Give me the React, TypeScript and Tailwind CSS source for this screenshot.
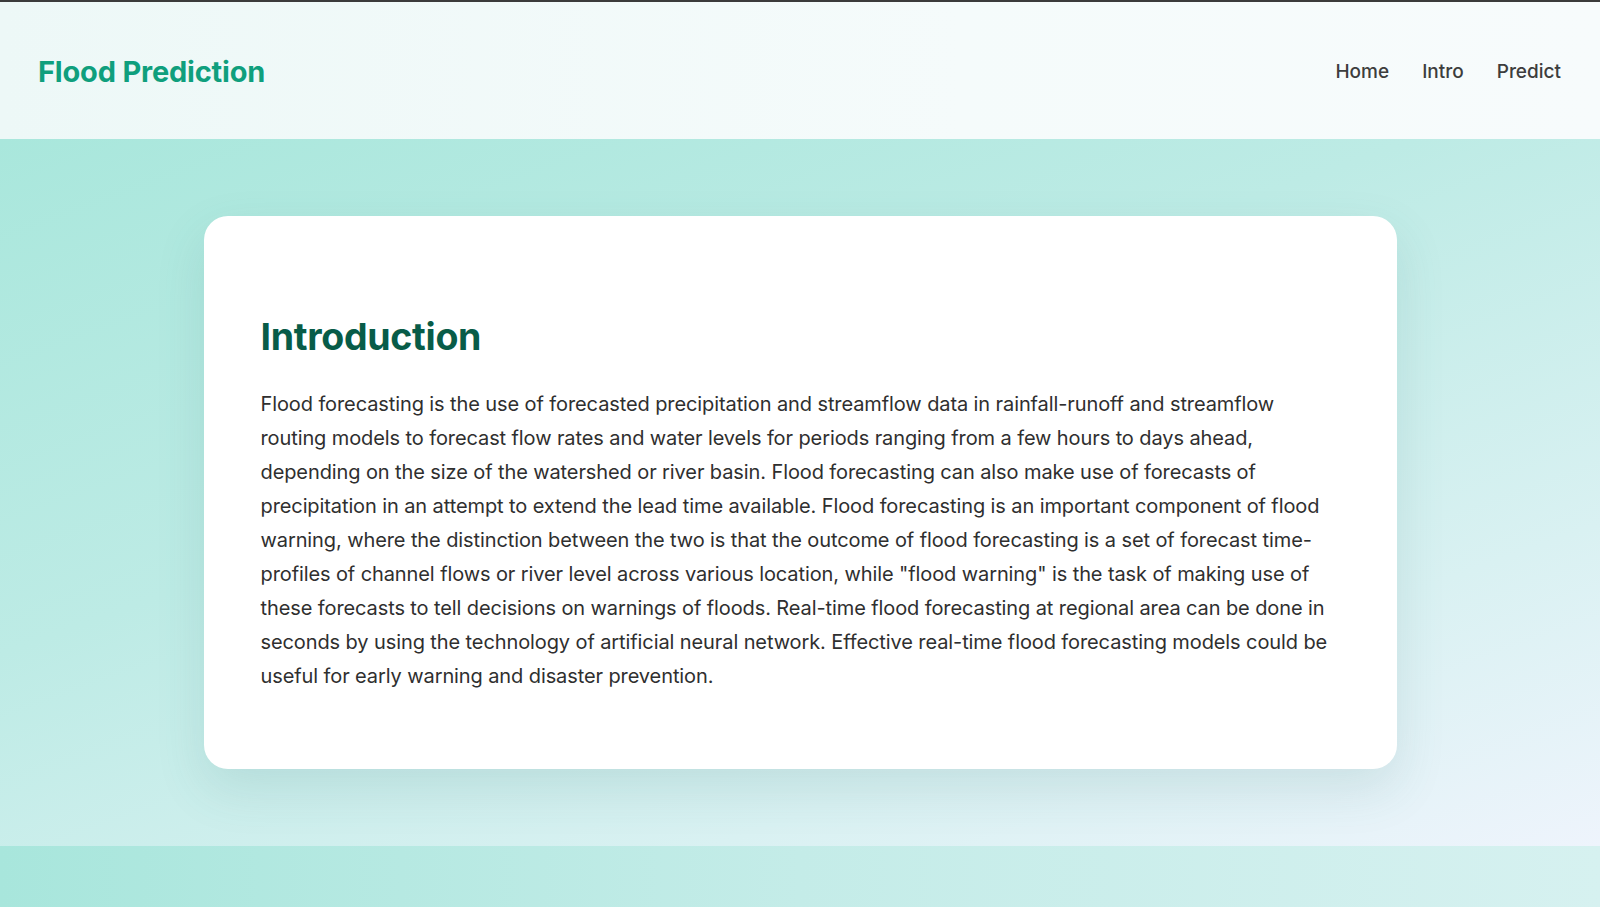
import React from 'react';

const introText =
  'Flood forecasting is the use of forecasted precipitation and streamflow data in rainfall-runoff and streamflow routing models to forecast flow rates and water levels for periods ranging from a few hours to days ahead, depending on the size of the watershed or river basin. Flood forecasting can also make use of forecasts of precipitation in an attempt to extend the lead time available. Flood forecasting is an important component of flood warning, where the distinction between the two is that the outcome of flood forecasting is a set of forecast time-profiles of channel flows or river level across various location, while "flood warning" is the task of making use of these forecasts to tell decisions on warnings of floods. Real-time flood forecasting at regional area can be done in seconds by using the technology of artificial neural network. Effective real-time flood forecasting models could be useful for early warning and disaster prevention.';

export default function App() {
  return (
    <div className="min-h-screen flex flex-col font-['Inter','Noto_Sans',sans-serif]">
      <div className="h-[2px] bg-[#3b3b3b]" />

      {/* Header */}
      <header className="h-[137px] flex items-center justify-between pl-[38px] pr-[39px] bg-[linear-gradient(90deg,#edf8f7_0%,#f5fbfb_60%,#f7fbfc_100%)]">
        <h1 className="text-[29px] font-bold tracking-[-0.2px] text-[#0f9f7d] mt-[2px]">Flood Prediction</h1>
        <nav className="flex items-center gap-[33px] text-[19px] font-medium text-[#3d3d3d] mt-[3px]">
          <a href="#">Home</a>
          <a href="#">Intro</a>
          <a href="#">Predict</a>
        </nav>
      </header>

      {/* Main */}
      <main className="h-[707px] flex justify-center pt-[77px] bg-[linear-gradient(160deg,#a9e7dc_0%,#bdebe5_40%,#d9f1f2_75%,#eef4fc_100%)]">
        <section className="w-[1193px] h-[553px] bg-white rounded-[24px] shadow-[0_20px_50px_rgba(60,120,120,0.14)] px-[57px] pt-[99px]">
          <h2 className="text-[37.5px] leading-[44px] font-bold tracking-[-0.3px] text-[#085c48]">Introduction</h2>
          <p className="mt-[28px] text-[20px] leading-[34px] tracking-[-0.1px] text-[#2f2f2f]">{introText}</p>
        </section>
      </main>

      {/* Bottom strip */}
      <div className="h-[61px] bg-[linear-gradient(90deg,#a8e6dc_0%,#c4ece8_50%,#d6f1f0_100%)]" />
    </div>
  );
}
